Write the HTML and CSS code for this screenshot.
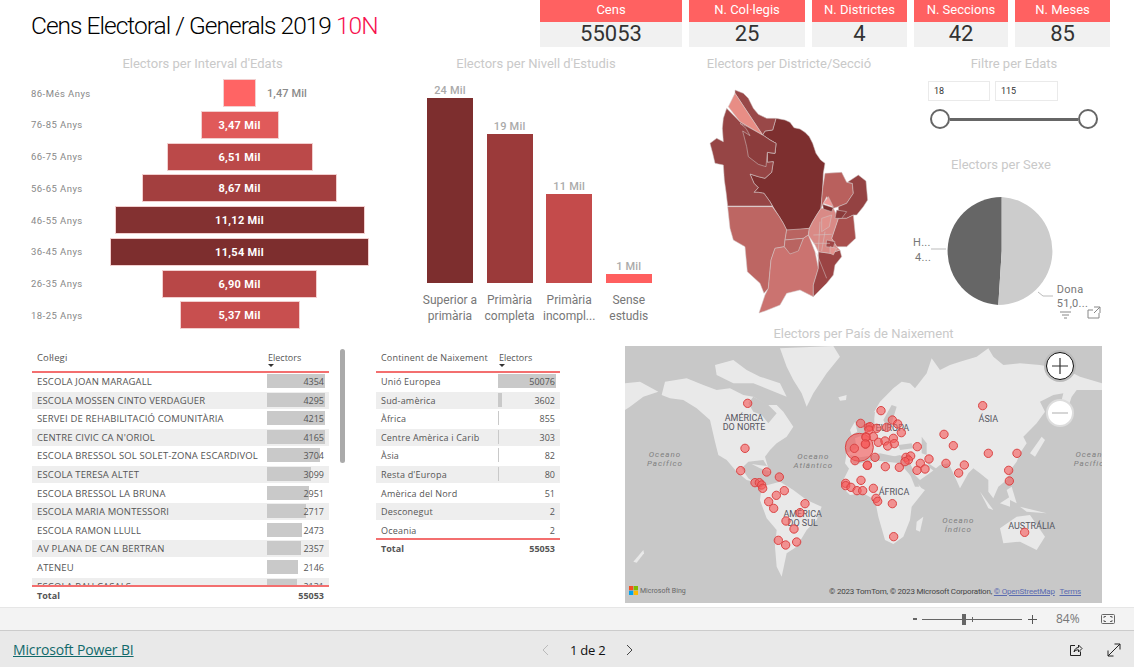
FILE: index.html
```html
<!DOCTYPE html>
<html lang="ca">
<head>
<meta charset="utf-8">
<title>Cens Electoral</title>
<link rel="stylesheet" href="styles.css">
</head>
<body>
<div class="page">
<main class="canvas">
  <header class="head">
    <h1 class="title">Cens Electoral / Generals 2019 <span class="accent">10N</span></h1>
    <div class="kpis">
      <div class="kpi"><div class="kpi-label">Cens</div><div class="kpi-value">55053</div></div>
      <div class="kpi"><div class="kpi-label">N. Col·legis</div><div class="kpi-value">25</div></div>
      <div class="kpi"><div class="kpi-label">N. Districtes</div><div class="kpi-value">4</div></div>
      <div class="kpi"><div class="kpi-label">N. Seccions</div><div class="kpi-value">42</div></div>
      <div class="kpi"><div class="kpi-label">N. Meses</div><div class="kpi-value">85</div></div>
    </div>
  </header>

  <div class="mid">
    <section class="pyr">
      <h2 class="vt">Electors per Interval d'Edats</h2>
      <div class="pyr-rows">
        <div class="pyr-row"><span class="pyr-label">86-Més Anys</span><div class="pyr-track"><div class="pyr-bar c1" style="width:33px"><span class="pyr-out">1,47 Mil</span></div></div></div>
        <div class="pyr-row"><span class="pyr-label">76-85 Anys</span><div class="pyr-track"><div class="pyr-bar c2" style="width:78px">3,47 Mil</div></div></div>
        <div class="pyr-row"><span class="pyr-label">66-75 Anys</span><div class="pyr-track"><div class="pyr-bar c3" style="width:146px">6,51 Mil</div></div></div>
        <div class="pyr-row"><span class="pyr-label">56-65 Anys</span><div class="pyr-track"><div class="pyr-bar c4" style="width:195px">8,67 Mil</div></div></div>
        <div class="pyr-row"><span class="pyr-label">46-55 Anys</span><div class="pyr-track"><div class="pyr-bar c5" style="width:250px">11,12 Mil</div></div></div>
        <div class="pyr-row"><span class="pyr-label">36-45 Anys</span><div class="pyr-track"><div class="pyr-bar c6" style="width:259px">11,54 Mil</div></div></div>
        <div class="pyr-row"><span class="pyr-label">26-35 Anys</span><div class="pyr-track"><div class="pyr-bar c7" style="width:155px">6,90 Mil</div></div></div>
        <div class="pyr-row"><span class="pyr-label">18-25 Anys</span><div class="pyr-track"><div class="pyr-bar c8" style="width:120px">5,37 Mil</div></div></div>
      </div>
    </section>

    <section class="niv">
      <h2 class="vt">Electors per Nivell d'Estudis</h2>
      <div class="niv-cols">
        <div class="niv-col"><div class="niv-plot"><span class="niv-val">24 Mil</span><div class="niv-bar n1" style="height:185px"></div></div><div class="niv-cat">Superior a primària</div></div>
        <div class="niv-col"><div class="niv-plot"><span class="niv-val">19 Mil</span><div class="niv-bar n2" style="height:149px"></div></div><div class="niv-cat">Primària completa</div></div>
        <div class="niv-col"><div class="niv-plot"><span class="niv-val">11 Mil</span><div class="niv-bar n3" style="height:89px"></div></div><div class="niv-cat">Primària incompl...</div></div>
        <div class="niv-col"><div class="niv-plot"><span class="niv-val">1 Mil</span><div class="niv-bar n4" style="height:9px"></div></div><div class="niv-cat">Sense estudis</div></div>
      </div>
    </section>

    <section class="dist">
      <h2 class="vt">Electors per Districte/Secció</h2>
      <svg class="dist-map" viewBox="0 0 570 720" width="190" height="240" aria-label="Mapa de districtes">
        <g class="sec">
          <path fill="#7d2f2f" d="M258 130L285 135 300 142 312 158 330 162 345 172 358 185 368 205 378 235 392 255 405 265 400 295 398 340 393 400 380 420 368 440 358 460 320 465 290 465 280 445 268 425 255 405 240 380 222 355 205 352 192 352 205 338 192 325 180 297 205 305 225 310 245 292 250 260 232 262 232 232 255 235 258 205 240 195 218 180 225 168 248 165Z"/>
          <path fill="#964545" d="M110 100L150 140 218 180 240 195 258 205 255 235 232 232 232 262 250 260 245 292 225 310 205 305 180 297 192 325 205 338 192 352 205 352 222 355 240 380 247 393 113 393 108 350 103 315 100 270 75 265 68 235 60 205 80 190 100 200 97 160 100 130Z"/>
          <path fill="#8c3c3c" d="M150 145L172 155 218 180 240 195 258 205 255 235 232 232 228 275 205 268 175 245 170 215 158 168 180 182 168 160Z"/>
          <path fill="#994848" d="M135 45L160 55 175 70 190 100 205 118 230 130 258 130 248 165 225 168 218 180 135 55Z"/>
          <path fill="#e88d85" d="M135 55L218 180 150 140 115 95Z"/>
          <path fill="#bd6663" d="M113 395L247 395 268 425 280 445 290 465 285 495 283 515 255 520 243 555 235 640 222 655 210 625 172 590 165 515 130 495 120 460Z"/>
          <path fill="#b96461" d="M290 465L358 460 355 480 340 490 285 495Z"/>
          <path fill="#cb7370" d="M255 520L283 515 300 535 325 525 340 490 355 480 375 530 385 580 370 630 370 665 330 645 290 655 270 690 225 708 207 714 225 660 235 640 243 555Z"/>
          <path fill="#b96461" d="M285 495L340 490 325 528 300 537 283 515Z"/>
          <path fill="#b9605d" d="M405 295L455 292 470 322 487 325 490 355 470 385 445 395 430 400 410 365 393 400 398 340Z"/>
          <path fill="#944242" d="M505 300L528 318 533 375 520 395 500 420 490 420 470 430 445 430 445 395 470 385 490 355 487 325 472 322Z"/>
          <path fill="#a94f4d" d="M490 420L497 490 470 515 440 515 425 490 445 430 470 430Z"/>
          <path fill="#9b4444" d="M385 530L420 535 450 525 455 545 435 570 430 600 410 625 370 665 370 630 385 580Z"/>
          <path fill="#d98a86" d="M393 400L430 400 445 430 425 490 440 515 450 525 420 535 385 530 375 510 355 480 358 460 368 440 380 420Z"/>
          <path fill="#7d2f2f" d="M398 388L430 398 425 410 400 402Z"/>
          <path fill="#f09a98" d="M415 365L430 395 400 385Z"/>
          <path fill="#e0908b" d="M395 430L425 420 418 455 395 470Z"/>
          <path fill="#8a3a3a" d="M440 405L470 410 455 430 435 430Z"/>
          <path fill="#a04646" d="M410 495L435 500 430 518 408 515Z"/>
          <path fill="#e59590" d="M420 515L440 520 430 540 420 535Z"/>
          <path fill="none" d="M370 480L425 478M390 440L385 528M405 470L395 528M370 505L420 505M380 535L410 610"/>
        </g>
      </svg>
    </section>

    <section class="side">
      <div class="filter">
        <h2 class="vt">Filtre per Edats</h2>
        <div class="inputs"><div class="inp">18</div><div class="inp inp-b">115</div></div>
        <div class="slider"><span class="knob"></span><span class="rail"></span><span class="knob"></span></div>
      </div>
      <div class="sex">
        <h2 class="vt">Electors per Sexe</h2>
        <svg class="pie" viewBox="0 0 200 150" width="200" height="150">
          <path fill="#666" d="M90.7 78L90.7 24A54 54 0 0 0 87.3 131.900Z"/>
          <path fill="#ccc" d="M90.7 78L90.7 24A54 54 0 0 1 87.3 131.900Z"/>
          <path class="lead" d="M20 76H35M127 119L132 123H142"/>
          <text class="pie-t" x="2" y="73">H...</text>
          <text class="pie-t" x="4" y="88">4...</text>
          <text class="pie-t" x="145.7" y="120">Dona</text>
          <text class="pie-t" x="145.7" y="134">51,0...</text>
          <path class="ficon" d="M149 139H160M151 142H158M153 145H156"/>
          <path class="ficon" d="M177 137H182M177 137V145H188V140M183 134H189V140M189 134L183 140"/>
        </svg>
      </div>
    </section>
  </div>

  <div class="bot">
    <section class="tbl tbl-a">
      <div class="t-head"><span class="t-name">Col·legi</span><span class="t-num">Electors<i class="sort"></i></span></div>
      <div class="t-body">
        <div class="t-row"><span class="t-name">ESCOLA JOAN MARAGALL</span><span class="t-num"><i class="dbar" style="width:100%"></i><b>4354</b></span></div>
        <div class="t-row"><span class="t-name">ESCOLA MOSSEN CINTO VERDAGUER</span><span class="t-num"><i class="dbar" style="width:98.6%"></i><b>4295</b></span></div>
        <div class="t-row"><span class="t-name">SERVEI DE REHABILITACIÓ COMUNITÀRIA</span><span class="t-num"><i class="dbar" style="width:96.8%"></i><b>4215</b></span></div>
        <div class="t-row"><span class="t-name">CENTRE CIVIC CA N'ORIOL</span><span class="t-num"><i class="dbar" style="width:95.7%"></i><b>4165</b></span></div>
        <div class="t-row"><span class="t-name">ESCOLA BRESSOL SOL SOLET-ZONA ESCARDIVOL</span><span class="t-num"><i class="dbar" style="width:85.1%"></i><b>3704</b></span></div>
        <div class="t-row"><span class="t-name">ESCOLA TERESA ALTET</span><span class="t-num"><i class="dbar" style="width:71.2%"></i><b>3099</b></span></div>
        <div class="t-row"><span class="t-name">ESCOLA BRESSOL LA BRUNA</span><span class="t-num"><i class="dbar" style="width:67.8%"></i><b>2951</b></span></div>
        <div class="t-row"><span class="t-name">ESCOLA MARIA MONTESSORI</span><span class="t-num"><i class="dbar" style="width:62.4%"></i><b>2717</b></span></div>
        <div class="t-row"><span class="t-name">ESCOLA RAMON LLULL</span><span class="t-num"><i class="dbar" style="width:56.8%"></i><b>2473</b></span></div>
        <div class="t-row"><span class="t-name">AV PLANA DE CAN BERTRAN</span><span class="t-num"><i class="dbar" style="width:54.1%"></i><b>2357</b></span></div>
        <div class="t-row"><span class="t-name">ATENEU</span><span class="t-num"><i class="dbar" style="width:49.3%"></i><b>2146</b></span></div>
        <div class="t-row"><span class="t-name">ESCOLA PAU CASALS</span><span class="t-num"><i class="dbar" style="width:48.9%"></i><b>2131</b></span></div>
      </div>
      <div class="t-total"><span class="t-name">Total</span><span class="t-num">55053</span></div>
      <div class="scroll"></div>
    </section>

    <section class="tbl tbl-b">
      <div class="t-head"><span class="t-name">Continent de Naixement</span><span class="t-num">Electors<i class="sort"></i></span></div>
      <div class="t-body">
        <div class="t-row"><span class="t-name">Unió Europea</span><span class="t-num"><i class="dbar" style="width:100%"></i><b>50076</b></span></div>
        <div class="t-row"><span class="t-name">Sud-amèrica</span><span class="t-num"><i class="dbar" style="width:7.2%"></i><b>3602</b></span></div>
        <div class="t-row"><span class="t-name">Àfrica</span><span class="t-num"><i class="dbar" style="width:1.7%"></i><b>855</b></span></div>
        <div class="t-row"><span class="t-name">Centre Amèrica i Carib</span><span class="t-num"><i class="dbar" style="width:.6%"></i><b>303</b></span></div>
        <div class="t-row"><span class="t-name">Àsia</span><span class="t-num"><i class="dbar" style="width:.4%"></i><b>82</b></span></div>
        <div class="t-row"><span class="t-name">Resta d'Europa</span><span class="t-num"><i class="dbar" style="width:.4%"></i><b>80</b></span></div>
        <div class="t-row"><span class="t-name">Amèrica del Nord</span><span class="t-num"><b>51</b></span></div>
        <div class="t-row"><span class="t-name">Desconegut</span><span class="t-num"><b>2</b></span></div>
        <div class="t-row"><span class="t-name">Oceania</span><span class="t-num"><b>2</b></span></div>
      </div>
      <div class="t-total"><span class="t-name">Total</span><span class="t-num">55053</span></div>
    </section>

    <section class="geo">
      <h2 class="vt">Electors per País de Naixement</h2>
      <div class="geo-map">
        <svg class="geo-svg" viewBox="0 0 477 257" width="477" height="257">
          <g transform="translate(-5 -6) scale(.33333)">
            <g class="land">
              <path d="M135 125L200 115 250 135 290 150 330 145 370 165 400 170 440 195 470 195 490 215 520 260 500 290 470 310 450 330 435 350 445 385 430 360 385 365 365 385 385 415 400 425 380 420 350 395 320 360 295 345 285 305 270 240 230 205 190 180 150 175 125 165Z"/>
              <path d="M285 75L340 60 380 90 420 110 480 130 500 170 450 150 400 130 340 130 290 105Z"/>
              <path d="M480 25L640 18 660 50 620 100 580 160 560 200 545 160 520 120 500 80Z"/>
              <path d="M15 130L60 125 115 155 70 170 30 200 15 210Z"/>
              <path d="M425 440L480 425 520 450 560 480 605 500 590 540 560 570 530 620 500 640 485 710 470 680 465 620 470 570 440 535 420 480Z"/>
              <path d="M395 372L440 378 455 395 420 385Z"/>
              <path d="M655 172L680 165 678 180 660 182Z"/>
              <path d="M40 665L70 630 72 640 50 668Z"/>
            </g>
            <path class="sea" d="M400 170L445 195 470 220 445 250 425 225 400 215 385 190Z"/>
            <g class="geo-l">
              <text x="372" y="242">AMÉRICA</text><text x="372" y="270">DO NORTE</text>
              <text x="548" y="530">AMÉRICA</text><text x="548" y="558">DO SUL</text>
            </g>
            <g class="geo-o">
              <text x="135" y="350">Oceano</text><text x="135" y="379">Pacífico</text>
              <text x="580" y="356">Oceano</text><text x="580" y="385">Atlântico</text>
            </g>
          </g>
          <g transform="translate(235 -6) scale(.33333)">
            <g class="land">
              <path d="M-50 420L-30 380 30 360 80 365 120 370 150 405 185 445 195 450 155 500 150 540 130 590 100 612 75 600 55 530 45 480 10 460 -30 465 -50 445Z"/>
              <path d="M-45 370L-40 340 -10 325 -15 295 10 285 15 265 45 262 40 220 60 185 100 145 125 125 150 130 165 145 200 100 215 55 240 90 270 75 300 65 350 50 385 25 400 50 430 75 480 70 540 75 620 90 660 110 726 130 726 150 690 150 650 150 635 170 620 215 600 200 610 160 580 165 540 185 555 215 530 250 490 290 500 310 480 340 470 365 455 385 440 420 415 440 400 475 385 455 385 420 360 400 340 385 325 400 300 445 280 400 265 370 240 375 215 395 180 420 165 405 150 370 110 350 60 340 20 350 -30 390Z"/>
              <path d="M420 565L470 530 510 525 555 590 530 630 480 605 430 610Z"/>
              <path d="M170 545L190 530 180 575 168 570Z"/>
              <path d="M360 455L400 510 385 505Z"/>
              <path d="M420 490L450 470 450 500Z"/>
              <path d="M480 500L560 520 500 515Z"/>
              <path d="M510 340L545 290 555 300 525 350Z"/>
              <path d="M-30 270L-15 245 -8 275 -25 285Z"/>
              <path d="M440 450L455 440 470 490 450 480Z"/>
            </g>
            <path class="sea" d="M-30 345L0 352 50 345 80 355 120 345 140 360 110 365 60 360 20 365 -20 372Z"/>
            <path class="sea" d="M115 315L155 310 160 325 120 330Z"/>
            <path class="sea" d="M185 290L200 310 200 345 185 340Z"/>
            <path class="sea" d="M135 365L150 370 178 440 165 440Z"/>
            <path class="sea" d="M205 370L235 390 225 395 205 380Z"/>
            <path class="sea" d="M70 240L95 195 110 200 95 250 80 260Z"/>
            <path class="sea" d="M20 225L45 215 40 265 15 260Z"/>
            <g class="geo-l">
              <text x="97" y="272">EUROPA</text><text x="385" y="247">ÁSIA</text><text x="102" y="465">ÁFRICA</text><text x="515" y="566">AUSTRÁLIA</text>
            </g>
            <g class="geo-o">
              <text x="295" y="549">Oceano</text><text x="295" y="576">Índico</text>
              <text x="695" y="350">Oceano</text><text x="695" y="378">Pacífico</text>
            </g>
          </g>
          <g transform="translate(-5 -6) scale(.33333)" class="bub">
            <circle cx="718" cy="322" r="42"/>
            <circle cx="383" cy="190" r="12.500"/><circle cx="375" cy="325" r="12.500"/><circle cx="362" cy="392" r="12.500"/><circle cx="440" cy="396" r="12.500"/><circle cx="478" cy="411" r="12.500"/><circle cx="405" cy="428" r="12.500"/><circle cx="418" cy="428" r="12.500"/><circle cx="425" cy="435" r="12.500"/><circle cx="428" cy="445" r="12.500"/><circle cx="493" cy="452" r="12.500"/><circle cx="469" cy="466" r="12.500"/><circle cx="446" cy="485" r="12.500"/><circle cx="461" cy="505" r="12.500"/><circle cx="555" cy="491" r="12.500"/><circle cx="540" cy="518" r="12.500"/><circle cx="498" cy="543" r="12.500"/><circle cx="522" cy="567" r="12.500"/><circle cx="475" cy="601" r="12.500"/><circle cx="497" cy="615" r="12.500"/><circle cx="530" cy="606" r="12.500"/><circle cx="722" cy="250" r="12.500"/><circle cx="745" cy="262" r="12.500"/><circle cx="738" cy="290" r="12.500"/><circle cx="737" cy="312" r="12.500"/><circle cx="703" cy="325" r="12.500"/><circle cx="705" cy="362" r="12.500"/><circle cx="742" cy="376" r="12.500"/><circle cx="723" cy="421" r="12.500"/><circle cx="677" cy="430" r="12.500"/><circle cx="677" cy="437" r="12.500"/><circle cx="693" cy="442" r="12.500"/><circle cx="711" cy="452" r="12.500"/><circle cx="728" cy="452" r="12.500"/>
          </g>
          <g transform="translate(235 -6) scale(.33333)" class="bub">
            <circle cx="63" cy="212" r="12.500"/><circle cx="97" cy="240" r="12.500"/><circle cx="113" cy="252" r="12.500"/><circle cx="124" cy="278" r="12.500"/><circle cx="30" cy="260" r="12.500"/><circle cx="27" cy="270" r="12.500"/><circle cx="50" cy="265" r="12.500"/><circle cx="80" cy="262" r="12.500"/><circle cx="40" cy="290" r="12.500"/><circle cx="18" cy="292" r="12.500"/><circle cx="16" cy="312" r="12.500"/><circle cx="55" cy="307" r="12.500"/><circle cx="75" cy="303" r="12.500"/><circle cx="100" cy="295" r="12.500"/><circle cx="103" cy="311" r="12.500"/><circle cx="83" cy="318" r="12.500"/><circle cx="172" cy="320" r="12.500"/><circle cx="45" cy="352" r="12.500"/><circle cx="22" cy="376" r="12.500"/><circle cx="76" cy="380" r="12.500"/><circle cx="118" cy="382" r="12.500"/><circle cx="138" cy="352" r="12.500"/><circle cx="152" cy="348" r="12.500"/><circle cx="145" cy="360" r="12.500"/><circle cx="135" cy="365" r="12.500"/><circle cx="207" cy="357" r="12.500"/><circle cx="181" cy="370" r="12.500"/><circle cx="195" cy="387" r="12.500"/><circle cx="171" cy="391" r="12.500"/><circle cx="40" cy="445" r="12.500"/><circle cx="48" cy="475" r="12.500"/><circle cx="53" cy="484" r="12.500"/><circle cx="97" cy="491" r="12.500"/><circle cx="101" cy="590" r="12.500"/><circle cx="252" cy="283" r="12.500"/><circle cx="280" cy="317" r="12.500"/><circle cx="368" cy="197" r="12.500"/><circle cx="385" cy="340" r="12.500"/><circle cx="471" cy="340" r="12.500"/><circle cx="258" cy="370" r="12.500"/><circle cx="313" cy="375" r="12.500"/><circle cx="296" cy="399" r="12.500"/><circle cx="446" cy="391" r="12.500"/><circle cx="448" cy="423" r="12.500"/><circle cx="494" cy="577" r="12.500"/>
          </g>
        </svg>
        <div class="zoom-btn zoom-in"><svg viewBox="0 0 16 16" width="16" height="16"><path d="M8 0V16M0 8H16"/></svg></div>
        <div class="zoom-btn zoom-out"><svg viewBox="0 0 16 16" width="16" height="16"><path d="M0 8H16"/></svg></div>
        <div class="bing">
          <svg viewBox="0 0 9 9" width="9" height="9"><rect width="4.300" height="4.300" fill="#f25022"/><rect x="4.700" width="4.300" height="4.300" fill="#7fba00"/><rect y="4.700" width="4.300" height="4.300" fill="#00a4ef"/><rect x="4.700" y="4.700" width="4.300" height="4.300" fill="#ffb900"/></svg>
          <span>Microsoft Bing</span>
        </div>
        <div class="attrib">© 2023 TomTom, © 2023 Microsoft Corporation, <u>© OpenStreetMap</u> <u class="terms">Terms</u></div>
      </div>
    </section>
  </div>
</main>

<div class="zoombar">
  <span class="zb-minus"></span>
  <div class="zb-track"><span class="zb-thumb"></span><span class="zb-tick"></span></div>
  <svg class="zb-plus" viewBox="0 0 9 9" width="9" height="9"><path d="M4.500 0V9M0 4.500H9"/></svg>
  <span class="zb-pct">84%</span>
  <svg class="zb-fit" viewBox="0 0 14 10" width="14" height="10"><rect x=".5" y=".5" width="13" height="9" rx="1"/><path d="M3 4V2.500H5M9 2.500H11V4M3 6V7.500H5M9 7.500H11V6"/></svg>
</div>

<footer class="foot">
  <a class="pbi">Microsoft Power BI</a>
  <div class="pager">
    <svg class="chev chev-off" viewBox="0 0 7 12" width="7" height="12"><path d="M6 1L1 6 6 11"/></svg>
    <span class="pg">1 de 2</span>
    <svg class="chev" viewBox="0 0 7 12" width="7" height="12"><path d="M1 1L6 6 1 11"/></svg>
  </div>
  <div class="foot-icons">
    <svg class="ficon2" viewBox="0 0 14 14" width="14" height="14"><path d="M6 2.500H1.500V12.500H11.500V8.500M5 9C5.500 6 7.500 4.500 9.500 4.500V2L13 5.500 9.500 9V6.800C7.500 6.800 6 7.500 5 9Z"/></svg>
    <svg class="ficon2" viewBox="0 0 14 14" width="14" height="14"><path d="M1 13L13 1M7.500 1H13V6.500M1 7.500V13H6.500"/></svg>
  </div>
</footer>
</div>
</body>
</html>
```

FILE: styles.css
```css
* { box-sizing: border-box; }
html, body { margin: 0; padding: 0; background: #fff; }
body { font-family: Roboto, "Liberation Sans", sans-serif; overflow: hidden; }
h1, h2 { margin: 0; font-weight: 400; }

.page { width: 1134px; height: 667px; display: flex; flex-direction: column; overflow: hidden; }
.canvas { height: 607px; flex: none; display: flex; flex-direction: column; overflow: hidden; }

/* header */
.head { height: 47px; flex: none; display: flex; justify-content: space-between; }
.title { padding: 9px 0 0 31px; font: 300 24.5px/34px Roboto, "Open Sans", sans-serif; letter-spacing: -.98px; color: #000; white-space: nowrap; }
.accent { color: #f7124f; }
.kpis { display: grid; grid-template-columns: 142px 116px 95px 94px 95px; gap: 7px; margin-right: 24px; }
.kpi { display: flex; flex-direction: column; background: #f1f1f1; text-align: center; }
.kpi-label { height: 22px; background: #ff6161; color: #fff; font-size: 13px; line-height: 20px; }
.kpi-value { height: 25px; font-size: 22px; line-height: 24px; color: #333; }

/* middle */
.mid { height: 282px; flex: none; display: flex; padding-top: 8px; }
.vt { height: 16px; padding-top: 1px; font-size: 13px; line-height: 16px; color: #c9c9c9; text-align: center; white-space: nowrap; }

.pyr { width: 405px; flex: none; }
.pyr-rows { margin-top: 8px; display: flex; flex-direction: column; gap: 3.760px; }
.pyr-row { height: 28px; display: flex; align-items: center; padding-left: 31px; }
.pyr-label { width: 78.500px; flex: none; font-size: 9.5px; letter-spacing: .45px; color: #888; white-space: nowrap; }
.pyr-track { width: 260px; flex: none; display: flex; justify-content: center; }
.pyr-bar { position: relative; height: 28px; border: 1px solid #f2cfcf; color: #fff; font-size: 11px; font-weight: 700; line-height: 27px; text-align: center; letter-spacing: .3px; white-space: nowrap; }
.pyr-out { position: absolute; left: 43px; top: 0; color: #8a8a8a; font-weight: 500; letter-spacing: .1px; }
.c1 { background: #ff6464; }
.c2 { background: #e05a5a; }
.c3 { background: #bb4949; }
.c4 { background: #a33f3f; }
.c5 { background: #833131; }
.c6 { background: #7d2e2e; }
.c7 { background: #b84747; }
.c8 { background: #c84f4f; }

.niv { width: 262px; flex: none; }
.niv-cols { display: flex; padding-left: 15.2px; }
.niv-col { width: 59.6px; flex: none; display: flex; flex-direction: column; align-items: center; }
.niv-plot { height: 212px; display: flex; flex-direction: column; justify-content: flex-end; align-items: center; }
.niv-val { font-size: 11px; line-height: 12px; margin-bottom: 1px; color: #aaa; font-weight: 500; letter-spacing: .2px; }
.niv-bar { width: 46px; }
.n1 { background: #7d2e2e; }
.n2 { background: #9b3a3a; }
.n3 { background: #c44b4b; }
.n4 { background: #ff5f5f; }
.niv-cat { margin-top: 9px; width: 59.6px; font-size: 12px; line-height: 16px; color: #777; text-align: center; }

.dist { width: 244px; flex: none; }
.dist-map { display: block; margin: 4px 0 0 23px; }
.sec path { stroke: #d2c6c6; stroke-width: 1.6; stroke-linejoin: round; }

.side { flex: 1; min-width: 0; }
.filter { width: 206px; }
.inputs { display: flex; gap: 5px; margin: 10px 0 0 17px; }
.inp { width: 62px; height: 20px; border: 1px solid #eaeaea; font-size: 9px; line-height: 18px; padding-left: 5px; color: #333; }
.inp-b { width: 63px; }
.slider { display: flex; align-items: center; width: 168px; height: 20px; margin: 8px 0 0 19px; }
.knob { width: 20px; height: 20px; flex: none; border: 2px solid #666; border-radius: 50%; background: #fff; }
.rail { flex: 1; height: 3px; background: #666; }
.sex { width: 200px; margin-top: 27px; }
.sex .vt { width: 180px; }
.pie { display: block; margin-top: 1px; }
.lead { fill: none; stroke: #bbb; stroke-width: 1; }
.pie-t { font-size: 11px; fill: #777; letter-spacing: .3px; }
.ficon { fill: none; stroke: #888; stroke-width: 1; }

/* bottom */
.bot { flex: 1; display: flex; min-height: 0; }
.tbl { position: relative; padding-top: 23px; flex: none; font: 9px/17px "Open Sans", "Noto Sans", sans-serif; color: #555; }
.tbl-a { width: 297px; margin-left: 32px; }
.tbl-b { width: 184px; margin-left: 47px; }
.t-head { display: flex; height: 19px; line-height: 11px; position: relative; }
.t-body { border-top: 2px solid #f36f6f; }
.tbl-a .t-body { height: 214px; overflow: hidden; }
.tbl-b .t-body { height: 167px; overflow: hidden; }
.t-row { display: flex; height: 17px; margin-bottom: 1.600px; white-space: nowrap; }
.t-row:nth-child(even) { background: #eee; }
.t-name { flex: 1; padding-left: 5px; white-space: nowrap; }
.t-num { position: relative; flex: none; width: 62px; padding-right: 5px; text-align: right; }
.tbl-a .t-name { font-size: 9.5px; letter-spacing: .14px; }
.tbl-b .t-name { letter-spacing: .2px; }
.t-num b { position: relative; font-weight: 400; }
.t-head .t-num { text-align: left; padding: 0 0 0 1px; }
.dbar { position: absolute; left: 0; top: 1px; height: 14px; background: #c9c9c9; max-width: 58px; }
.sort { position: absolute; left: 1px; top: 12px; width: 0; height: 0; border: 3px solid transparent; border-top: 3px solid #333; border-bottom: 0; }
.t-total { display: flex; border-top: 2px solid #f36f6f; font-weight: 700; height: 20px; line-height: 18px; }
.t-total .t-name { font-size: 9px; letter-spacing: 0; }
.scroll { position: absolute; left: 308px; top: 20px; width: 5px; height: 114px; border-radius: 3px; background: #aaa; }

.geo { width: 477px; margin-left: 65px; flex: none; }
.geo .vt { margin-top: -4px; }
.geo-map { position: relative; margin-top: 5px; width: 477px; height: 257px; background: #c8c8c8; overflow: hidden; }
.geo-svg { display: block; }
.land path { fill: #e9e9e9; }
.sea { fill: #c8c8c8; }
.geo-l text { font-size: 27px; fill: #55555f; text-anchor: middle; }
.geo-o text { font-size: 24px; fill: #808080; text-anchor: middle; font-style: italic; letter-spacing: 3px; }
.bub circle { fill: rgba(245, 90, 90, .62); stroke: #d94343; stroke-width: 3; }
.zoom-btn { position: absolute; display: flex; align-items: center; justify-content: center; border-radius: 50%; background: #fff; }
.zoom-btn path { fill: none; stroke-width: 1.2; }
.zoom-in { left: 421px; top: 6px; width: 28px; height: 28px; border: 1px solid #111; box-shadow: 0 0 0 2px #bbb; }
.zoom-in path { stroke: #333; }
.zoom-out { left: 421px; top: 53px; width: 28px; height: 28px; border: 2px solid #ddd; }
.zoom-out path { stroke: #bbb; }
.bing { position: absolute; left: 4px; bottom: 8px; display: flex; align-items: center; gap: 2px; font-size: 7px; color: #666; }
.attrib { position: absolute; right: 21px; bottom: 6px; font-size: 8px; line-height: 10px; color: #444; white-space: nowrap; letter-spacing: -.2px; }
.attrib u { color: #5a6bb0; }
.attrib .terms { margin-left: 3px; }

/* zoom bar */
.zoombar { height: 24px; flex: none; display: flex; align-items: center; background: #f3f3f3; border-top: 1px solid #e6e6e6; border-bottom: 1px solid #ccc; padding-left: 913px; }
.zb-minus { width: 4px; height: 2px; background: #666; flex: none; }
.zb-track { position: relative; width: 100px; height: 1px; margin-left: 5px; background: #666; flex: none; }
.zb-thumb { position: absolute; left: 40px; top: -5px; width: 4px; height: 11px; background: #666; }
.zb-tick { position: absolute; left: 50px; top: -2px; width: 1px; height: 5px; background: #666; }
.zb-plus { margin-left: 6px; flex: none; }
.zb-plus path { stroke: #555; fill: none; }
.zb-pct { margin-left: 19px; font: 12px/16px "Open Sans", sans-serif; color: #777; }
.zb-fit { margin-left: 21px; flex: none; }
.zb-fit rect, .zb-fit path { fill: none; stroke: #666; }

/* footer */
.foot { flex: 1; display: flex; align-items: center; background: #e9e9e9; padding: 2px 0 0 13px; }
.pbi { width: 529px; flex: none; font: 14px/18px "Open Sans", sans-serif; color: #11696b; text-decoration: underline; white-space: nowrap; letter-spacing: -.15px; }
.pager { display: flex; align-items: center; }
.pg { margin: 0 21px; font: 13px/18px "Open Sans", sans-serif; color: #111; letter-spacing: -.25px; }
.chev path { fill: none; stroke: #444; stroke-width: 1; }
.chev-off path { stroke: #bbb; }
.foot-icons { display: flex; gap: 24px; margin-left: 436px; }
.ficon2 path { fill: none; stroke: #222; stroke-width: 1; }
```
